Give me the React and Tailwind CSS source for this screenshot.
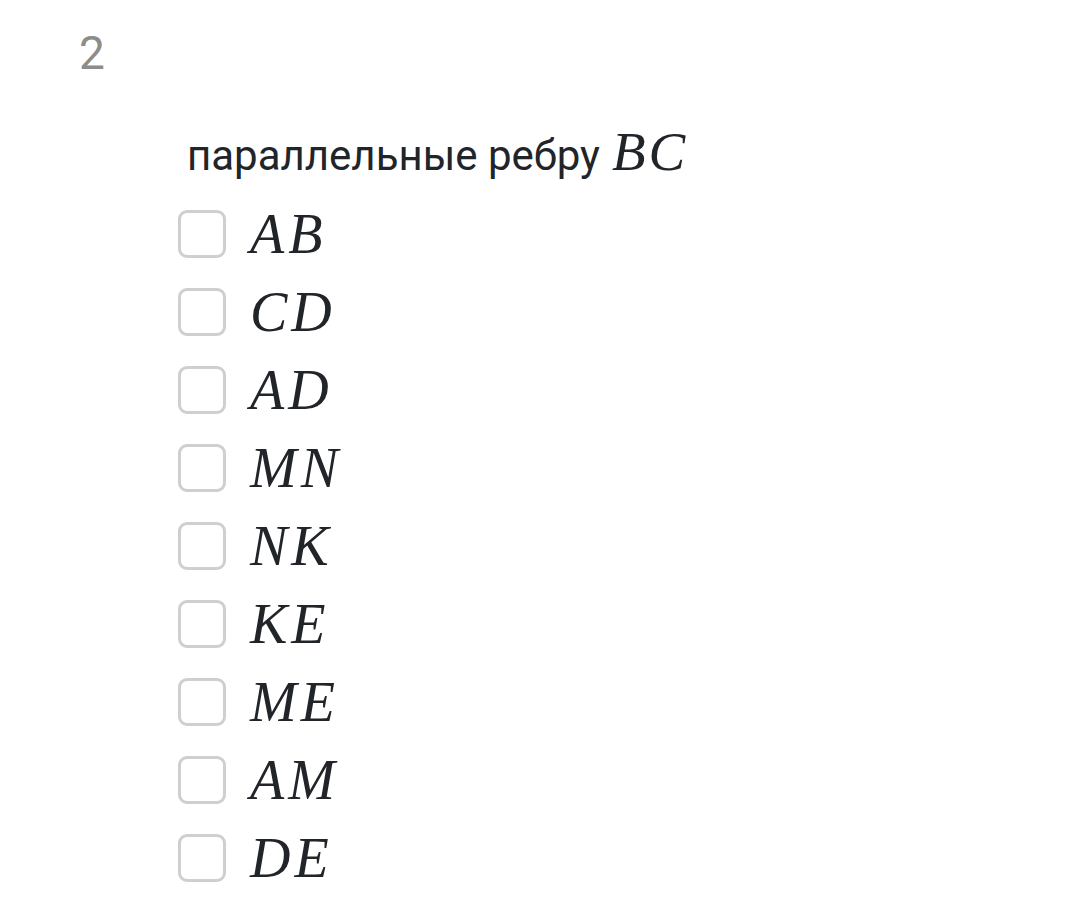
import React from 'react';

const options = ['AB', 'CD', 'AD', 'MN', 'NK', 'KE', 'ME', 'AM', 'DE'];

const math = { fontFamily: '"Liberation Serif", "DejaVu Serif", serif' };

export default function App() {
  return (
    <div className="min-h-[917px] bg-white text-[#212529]" style={{ fontFamily: 'Roboto, "Noto Sans", sans-serif' }}>
      <div className="pl-[79px] pt-[26px] text-[46px] leading-[54px] text-[#8c8c8c]">2</div>

      <div className="pl-[178px] pt-[44px]">
        <div className="pl-[9px] flex items-baseline text-[42px] leading-[56px]">
          <span>параллельные ребру</span>
          <span className="ml-[12px] italic text-[55px] tracking-[3px]" style={math}>BC</span>
        </div>

        <div className="mt-[11px] flex flex-col">
          {options.map((o) => (
            <label key={o} className="flex items-center h-[78px]">
              <span className="w-[48px] h-[48px] rounded-[9px] border-[3px] border-[#cfcfcf] bg-white shrink-0" />
              <span className="ml-[24px] italic text-[56px] leading-none tracking-[4px]" style={math}>{o}</span>
            </label>
          ))}
        </div>
      </div>
    </div>
  );
}
